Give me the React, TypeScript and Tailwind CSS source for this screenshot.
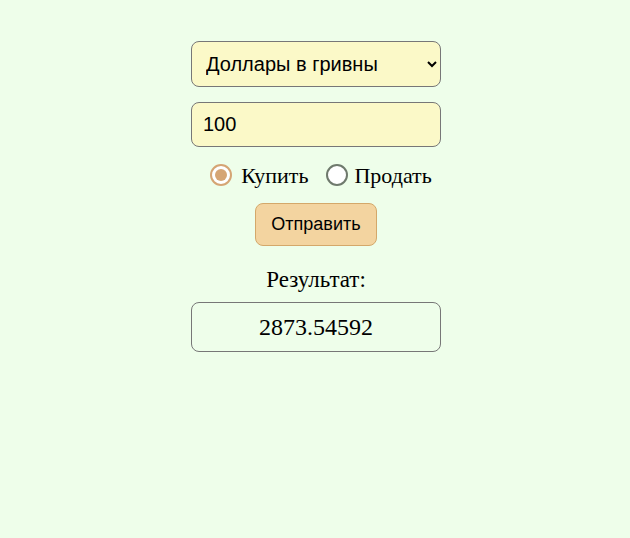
import React from "react";

export default function App() {
  return (
    <div className="min-h-[538px] w-full bg-[#eefeea] flex flex-col items-center pt-[41px] pl-[2px]">
      <select
        defaultValue="usd"
        className="w-[250px] h-[46px] rounded-[8px] border border-[#777] bg-[#fbf9c8] pl-[10px] pr-[6px] text-[20px] text-black font-['Liberation_Sans',Arial,sans-serif]"
      >
        <option value="usd">Доллары в гривны</option>
      </select>
      <input
        defaultValue="100"
        className="mt-[15px] w-[250px] h-[45px] rounded-[8px] border border-[#777] bg-[#fbf9c8] px-[11px] text-[20px] text-black font-['Liberation_Sans',Arial,sans-serif] outline-none"
      />
      <div className="mt-[16px] h-[24px] pl-[10px] flex items-center font-['Liberation_Serif','Times_New_Roman',serif] text-[22px] text-black">
        <label className="flex items-center">
          <span className="w-[22px] h-[22px] rounded-full border-2 border-[#d5a574] flex items-center justify-center bg-white">
            <span className="w-[12px] h-[12px] rounded-full bg-[#d5a574]" />
          </span>
          <span className="ml-[9px]">Купить</span>
        </label>
        <label className="flex items-center ml-[18px]">
          <span className="w-[22px] h-[22px] rounded-full border-2 border-[#6f7a6d] bg-white" />
          <span className="ml-[6px]">Продать</span>
        </label>
      </div>
      <button className="mt-[16px] w-[122px] h-[43px] rounded-[8px] border border-[#d4a86a] bg-[#f3d4a0] text-[18px] text-black font-['Liberation_Sans',Arial,sans-serif]">
        Отправить
      </button>
      <div className="mt-[21px] font-['Liberation_Serif','Times_New_Roman',serif] text-[23px] text-black leading-[26px]">
        Результат:
      </div>
      <div className="mt-[9px] w-[250px] h-[50px] rounded-[8px] border border-[#777] flex items-center justify-center font-['Liberation_Serif','Times_New_Roman',serif] text-[24px] text-black">
        2873.54592
      </div>
    </div>
  );
}
